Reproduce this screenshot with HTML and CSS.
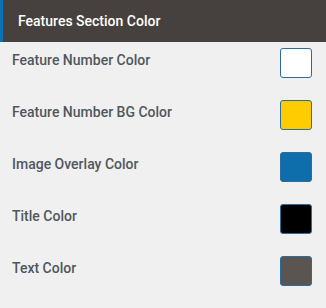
FILE: index.html
```html
<!DOCTYPE html>
<html lang="en">
<head>
    <meta charset="UTF-8">
    <meta name="viewport" content="width=device-width, initial-scale=1.0">
    <title>Features Section Color</title>
    <link rel="stylesheet" href="styles.css">
</head>
<body>
    <div class="panel">
        <div class="panel-header">Features Section Color</div>
        <div class="color-row">
            <span class="color-label">Feature Number Color</span>
            <span class="swatch swatch-white"></span>
        </div>
        <div class="color-row">
            <span class="color-label">Feature Number BG Color</span>
            <span class="swatch swatch-yellow"></span>
        </div>
        <div class="color-row">
            <span class="color-label">Image Overlay Color</span>
            <span class="swatch swatch-blue"></span>
        </div>
        <div class="color-row">
            <span class="color-label">Title Color</span>
            <span class="swatch swatch-black"></span>
        </div>
        <div class="color-row">
            <span class="color-label">Text Color</span>
            <span class="swatch swatch-grey"></span>
        </div>
    </div>
</body>
</html>
```

FILE: styles.css
```css
* {
    margin: 0;
    padding: 0;
    box-sizing: border-box;
}

body {
    font-family: Roboto, 'Noto Sans', sans-serif;
    background-color: #f0f0f0;
    min-height: 100vh;
}

.panel-header {
    height: 42px;
    display: flex;
    align-items: center;
    padding-left: 15px;
    background-color: #46413e;
    border-left: 3px solid #0a73b7;
    color: #ffffff;
    font-size: 14px;
    font-weight: 500;
}

.color-row {
    height: 52px;
    display: flex;
    justify-content: space-between;
    align-items: flex-start;
    padding: 6px 14px 0 12px;
}

.color-label {
    margin-top: 2px;
    line-height: 20px;
    font-size: 14px;
    font-weight: 500;
    color: #50575e;
}

.swatch {
    width: 32px;
    height: 30px;
    border: 1px solid #2c6c9c;
    border-radius: 3px;
}

.swatch-white { background-color: #ffffff; }
.swatch-yellow { background-color: #fecc00; }
.swatch-blue { background-color: #0e6dab; }
.swatch-black { background-color: #000000; }
.swatch-grey { background-color: #5a5550; }
```
